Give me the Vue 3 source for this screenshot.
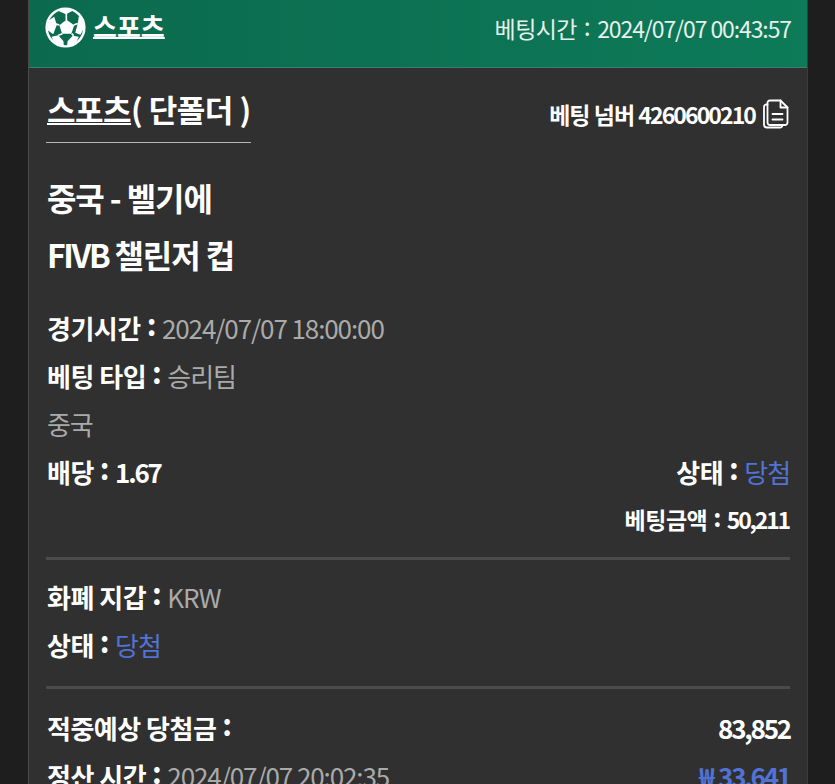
<script setup>
const infoRows = [
  { label: '경기시간', value: '2024/07/07 18:00:00' },
  { label: '베팅 타입', value: '승리팀' },
]
</script>

<template>
  <div class="page">
    <div class="card">
      <header class="top-bar">
        <div class="brand">
          <svg class="ball" viewBox="0 0 40 40">
            <circle cx="20" cy="20" r="18.4" fill="none" stroke="#fff" stroke-width="2.4" />
            <path fill="#fff" d="M21 12.500l7.500 5.200-2.800 8.500h-9l-2.700-8.500z" />
            <path fill="#fff" d="M12 3.500L20.500 7l7-3.500L22 1.500h-5zM2.500 14l.5 9 5 3.500 3.500-9-2.500-8zM37.500 12.500l.5 8.500-3.500 6-5-2 2.500-9 1-7zM9 35l-2.500-6 6.500-1.500 5 6 .5 5zM30 35.500l3-6.500-6-1-5 5.500-.5 5.500z" />
            <path fill="none" stroke="#fff" stroke-width="1.600" d="M20.800 6v7M28 17.500l4-1.500M14 17.500l-4-1M17 26l-4 1.500M26 26l2 2" />
          </svg>
          <span class="brand-name">스포츠</span>
        </div>
        <div class="bet-time">베팅시간<span class="colon-thin">:</span><span class="num">2024/07/07 00:43:57</span></div>
      </header>

      <section class="body">
        <div class="title-row">
          <h2 class="title"><span class="title-u">스포츠</span>( 단폴더 )</h2>
          <div class="bet-no">
            <span>베팅 넘버 <span class="num-bold">4260600210</span></span>
            <svg class="copy" viewBox="0 0 26 30" fill="none" stroke="#fff" stroke-width="1.800" stroke-linejoin="round" stroke-linecap="round">
              <path d="M4.500 5.500H3.500a2.500 2.500 0 0 0-2.500 2.500v17.500a3 3 0 0 0 3 3h13a2.500 2.500 0 0 0 2.500-2.500" />
              <path d="M7 1.500h10.500l7 7v15a2.500 2.500 0 0 1-2.500 2.500H7a2.500 2.500 0 0 1-2.500-2.500V4a2.500 2.500 0 0 1 2.500-2.500z" />
              <path d="M17.500 1.500v7h7M9.500 15h10M9.500 20.500h10" />
            </svg>
          </div>
        </div>

        <div class="match">
          <p>중국 - 벨기에</p>
          <p><span class="latin">FIVB</span> 챌린저 컵</p>
        </div>

        <div class="rows">
          <div v-for="row in infoRows" :key="row.label" class="row">
            <b>{{ row.label }}</b><b class="colon">:</b><span class="muted">{{ row.value }}</span>
          </div>
          <div class="row muted">중국</div>
          <div class="row split">
            <span><b>배당</b><b class="colon">:</b><b class="num-bold">1.67</b></span>
            <span><b>상태</b><b class="colon">:</b><span class="blue">당첨</span></span>
          </div>
          <div class="row right amount"><b>베팅금액</b><b class="colon small">:</b><b class="num-bold">50,211</b></div>
        </div>

        <div class="rule first"></div>

        <div class="row"><b>화폐 지갑</b><b class="colon">:</b><span class="muted">KRW</span></div>
        <div class="row"><b>상태</b><b class="colon">:</b><span class="blue">당첨</span></div>

        <div class="rule second"></div>

        <div class="row split">
          <span><b>적중예상 당첨금</b><b class="colon">:</b></span>
          <b class="num-bold">83,852</b>
        </div>
        <div class="row split">
          <span><b>정산 시간</b><b class="colon">:</b><span class="muted">2024/07/07 20:02:35</span></span>
          <b class="num-bold blue spaced">₩ 33,641</b>
        </div>
      </section>
    </div>
  </div>
</template>

<style>
html, body { margin: 0; background: #1d1d1d; }
</style>

<style scoped>
.page { height: 784px; overflow: hidden; background: #1e1e1e; font-family: "Noto Sans CJK KR", "Noto Sans", sans-serif; color: #fff; }
.card { width: 780px; margin-left: 28px; box-sizing: border-box; height: 784px; background: #303030; border-left: 1px solid #4a4a4a; border-right: 1px solid #3c3c3c; }

.top-bar { height: 68px; padding: 0 16px 12px 16px; display: flex; justify-content: space-between; align-items: center; box-sizing: border-box; background: linear-gradient(90deg, #0b6a4d, #0d7a58); border-bottom: 1px solid #3a7f6a; }
.brand { display: flex; align-items: center; gap: 7px; }
.ball { width: 41px; height: 41px; }
.brand-name { font-size: 26px; font-weight: 700; line-height: 30px; text-decoration: underline; text-underline-offset: 0; text-decoration-thickness: 2px; margin-top: -4px; }
.bet-time { font-size: 23px; letter-spacing: -0.6px; color: #e6f0ec; }
.bet-time .num { letter-spacing: -1.1px; }
.colon-thin { display: inline-block; font-size: 25px; margin: 0 7px; vertical-align: 2px; line-height: 1; }

.body { padding: 0 17px; }
.title-row { display: flex; justify-content: space-between; align-items: flex-start; padding-top: 14px; }
.title { margin: 0; padding-left: 1px; font-size: 31px; font-weight: 700; line-height: 54px; height: 60px; border-bottom: 1px solid #b9b9b9; letter-spacing: -0.5px; }
.title-u { text-decoration: underline; text-underline-offset: 1px; text-decoration-thickness: 2px; }
.bet-no { display: flex; align-items: center; gap: 8px; font-size: 23px; font-weight: 700; letter-spacing: -1px; height: 64px; margin-right: 1px; }
.bet-no .num-bold { letter-spacing: -1.9px; }
.copy { width: 26px; height: 30px; }

.match { margin-top: 23px; padding-left: 1px; }
.match p { margin: 0; font-size: 32px; font-weight: 700; line-height: 57px; letter-spacing: -1.100px; }
.latin { letter-spacing: -2.400px; }

.rows { margin-top: 21px; }
.row { padding-left: 1px; font-size: 26px; line-height: 48px; letter-spacing: -1.1px; white-space: nowrap; }
.row b { font-weight: 700; letter-spacing: -0.5px; }
.row b.colon { display: inline-block; font-size: 30px; margin: 0 6px; vertical-align: 3px; line-height: 1; }
.row b.colon.small { font-size: 25px; margin: 0 6px; vertical-align: 2px; }
.row b.num-bold { letter-spacing: -2.200px; }
.row b.spaced { word-spacing: 2px; }
.split { display: flex; justify-content: space-between; }
.right { text-align: right; padding-right: 1px; }
.amount { font-size: 23px; line-height: 46px; letter-spacing: -0.8px; }
.muted { color: #aaa; }
.blue { color: #5273d6; }

.rule { height: 3px; background: #4b4b4b; }
.first { margin: 15px 0 13px; }
.second { margin: 17px 0 15px; }
</style>
